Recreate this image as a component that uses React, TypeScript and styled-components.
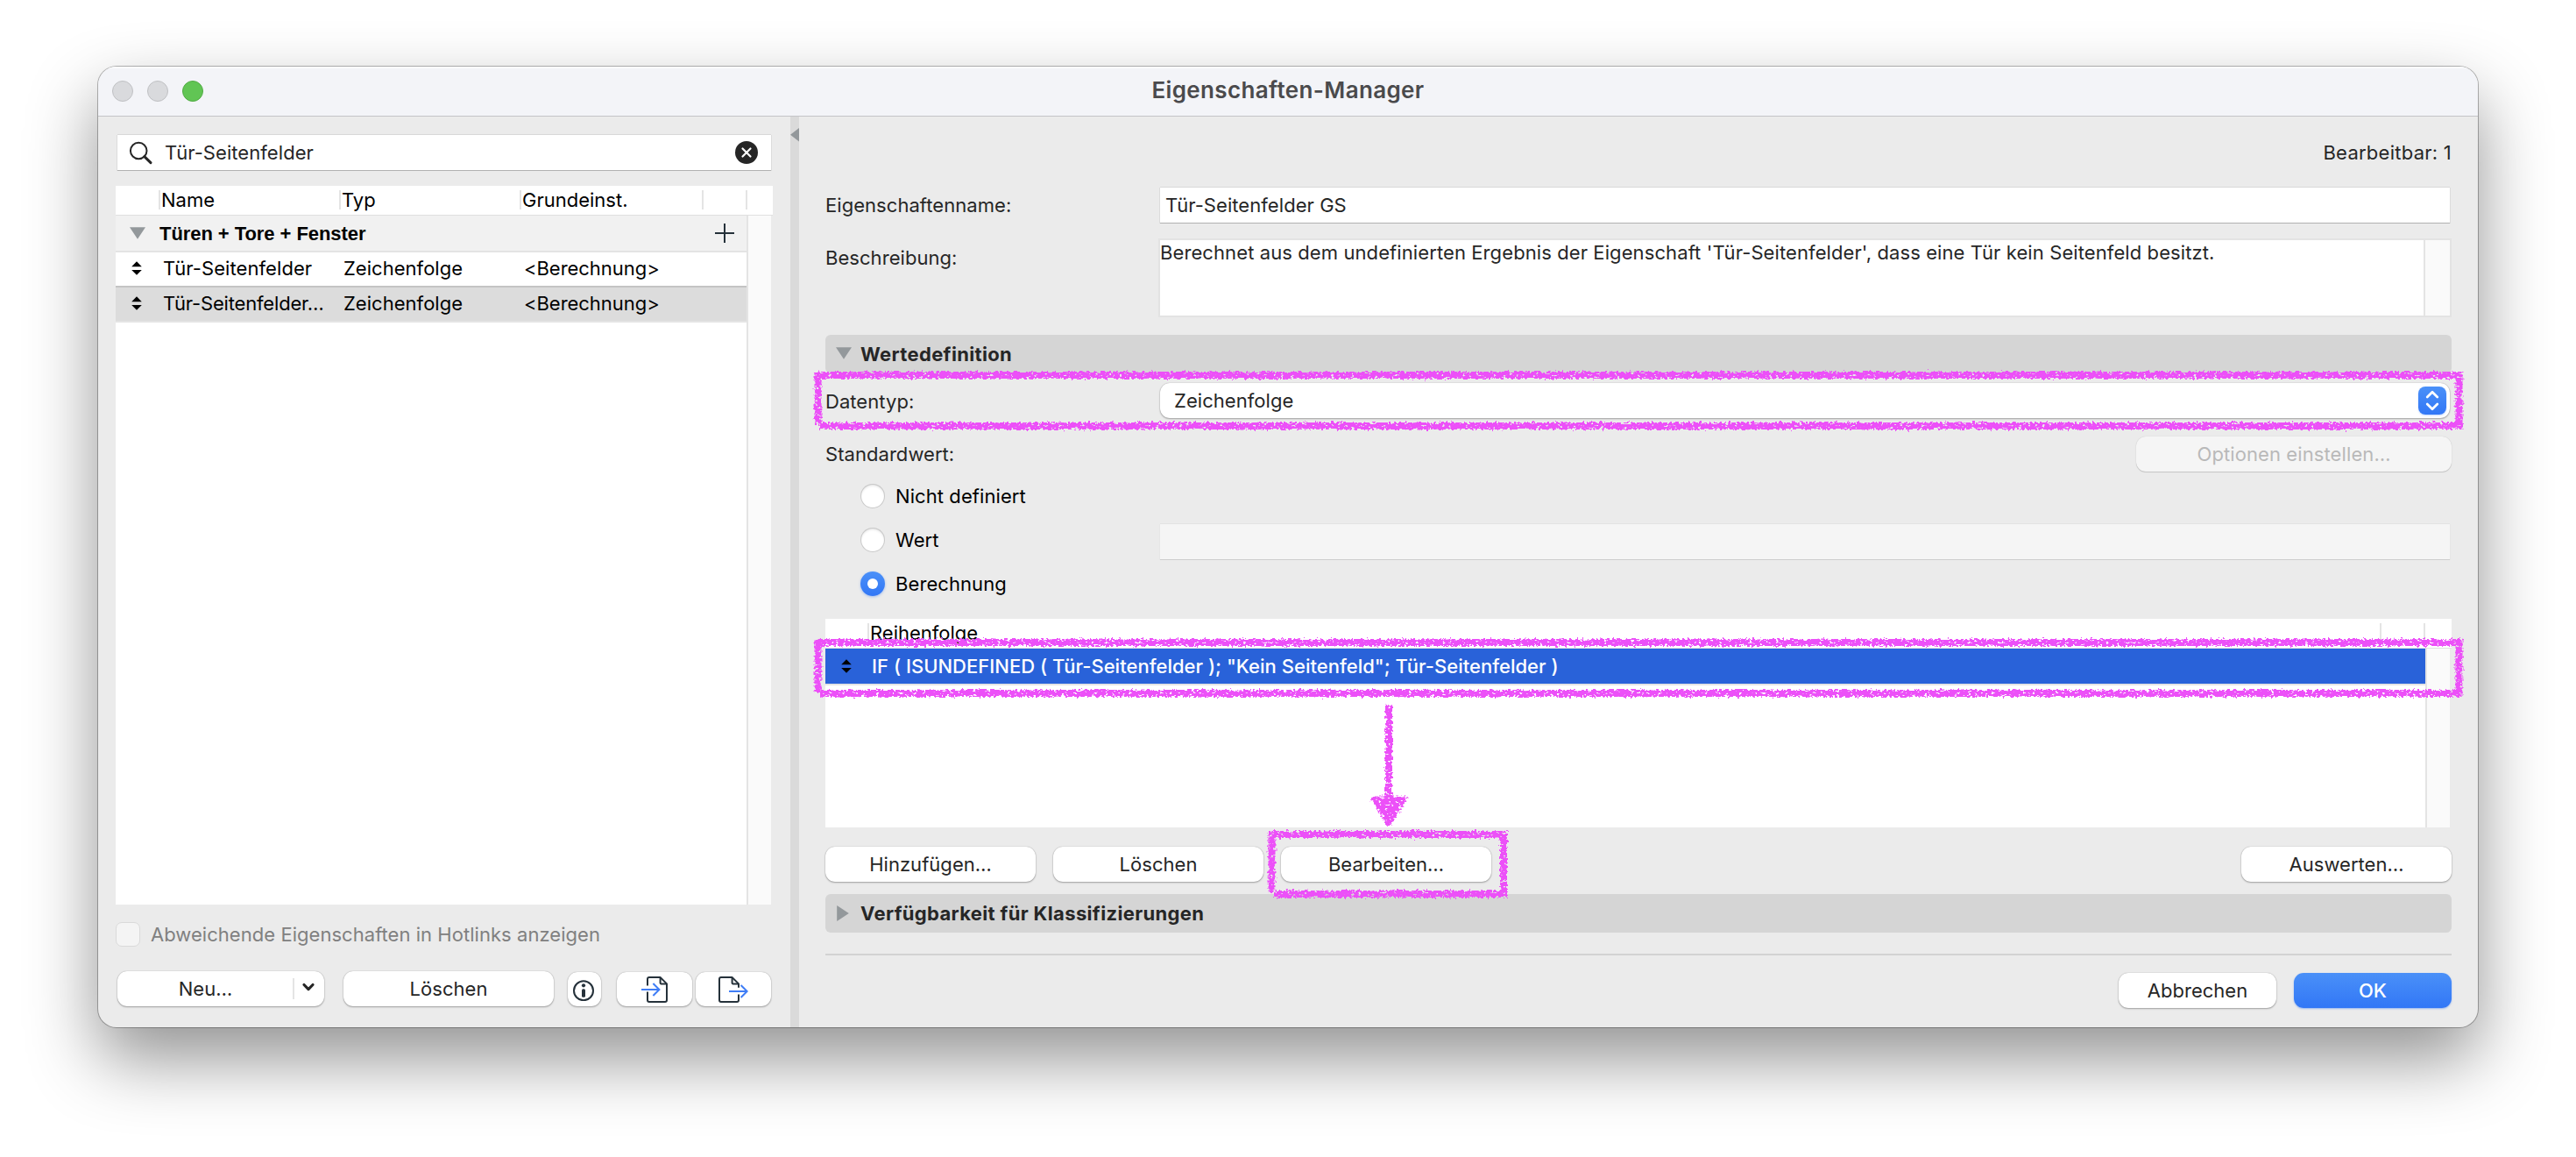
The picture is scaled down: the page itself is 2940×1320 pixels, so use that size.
import React from "react";
import styled, { createGlobalStyle, css } from "styled-components";

const GlobalStyle = createGlobalStyle`
  *, *::before, *::after { box-sizing: border-box; }
  html, body { margin: 0; padding: 0; background: #fff; }
  body {
    font-family: Inter, "Liberation Sans", sans-serif;
    font-size: 22px;
    color: #262626;
    -webkit-font-smoothing: antialiased;
  }
`;

const accent = "linear-gradient(180deg, #4a90f8 0%, #3277f6 100%)";
const marker = "#ec50f8";

/* ---------- window ---------- */

const Desktop = styled.div`
  position: relative;
  width: 2940px;
  height: 1320px;
  overflow: hidden;
  padding: 76px 112px 148px;
`;

const Window = styled.main`
  display: flex;
  flex-direction: column;
  width: 2716px;
  height: 1096px;
  border-radius: 21px;
  overflow: hidden;
  background: #ebebeb;
  box-shadow: 0 0 0 1px rgba(0, 0, 0, 0.28), 0 36px 80px rgba(0, 0, 0, 0.43);
`;

const TitleBar = styled.header`
  display: grid;
  grid-template-columns: 1fr auto 1fr;
  align-items: center;
  height: 57px;
  padding: 0 16px;
  background: #f3f4f8;
  border-bottom: 1px solid #c3c4c7;
  box-shadow: inset 0 2px 0 #fbfcfd;
`;

const Lights = styled.div`
  display: flex;
  gap: 16px;
`;

const Light = styled.span<{ $active?: boolean }>`
  width: 24px;
  height: 24px;
  border-radius: 50%;
  background: ${(p) => (p.$active ? "#61c554" : "#d9dadd")};
  border: 1px solid ${(p) => (p.$active ? "#52ab45" : "#bfc0c3")};
`;

const Title = styled.h1`
  margin: 0;
  padding-bottom: 2px;
  font-size: 26px;
  font-weight: 600;
  line-height: 32px;
  letter-spacing: 0.36px;
  color: #4a4a4c;
`;

const Body = styled.div`
  display: flex;
  flex: 1;
  min-height: 0;
`;

/* ---------- shared parts ---------- */

const Button = styled.button<{ $width: number; $primary?: boolean; $muted?: boolean; $tight?: boolean }>`
  display: flex;
  align-items: center;
  justify-content: center;
  width: ${(p) => p.$width}px;
  height: ${(p) => (p.$tight ? 39 : 40)}px;
  padding: 0;
  border: 0;
  border-radius: 11px;
  background: #fff;
  color: #262626;
  font: inherit;
  letter-spacing: 0.03px;
  white-space: nowrap;
  box-shadow: 0 0 1px rgba(0, 0, 0, 0.35), 0 1px 2px rgba(0, 0, 0, 0.3);
  ${(p) =>
    p.$primary &&
    css`
      background: ${accent};
      color: #fff;
      font-weight: 500;
      box-shadow: 0 1px 2px rgba(50, 119, 246, 0.45);
    `}
  ${(p) =>
    p.$muted &&
    css`
      background: #f5f5f5;
      color: #b9b9b9;
      letter-spacing: 0.1px;
      box-shadow: 0 0 1px rgba(0, 0, 0, 0.2), 0 1px 1px rgba(0, 0, 0, 0.15);
    `}
`;

const Field = styled.div<{ $disabled?: boolean }>`
  display: flex;
  align-items: center;
  height: 41px;
  background: ${(p) => (p.$disabled ? "#f5f5f5" : "#fff")};
  border-bottom: 1px solid ${(p) => (p.$disabled ? "#cdcdcd" : "#b1b1b1")};
  box-shadow: 0 -1px 0 ${(p) => (p.$disabled ? "#e2e2e2" : "#d8d8d8")},
    -1px 0 0 ${(p) => (p.$disabled ? "#e6e6e6" : "#dcdcdc")},
    1px 0 0 ${(p) => (p.$disabled ? "#e6e6e6" : "#dcdcdc")};
`;

const ScrollTrack = styled.div<{ $width: number }>`
  width: ${(p) => p.$width}px;
  background: #fafafa;
  border-left: 2px solid #e4e4e4;
`;

/* ---------- left side ---------- */

const Sidebar = styled.aside`
  display: flex;
  flex-direction: column;
  width: 790px;
  padding: 21px 20px 0;
`;

const SearchField = styled(Field)`
  margin: 0 2px;
  padding: 0 15px 0 13px;
`;

const SearchText = styled.span`
  flex: 1;
  margin-left: 13px;
  letter-spacing: 0.06px;
`;

const Table = styled.section`
  display: flex;
  flex-direction: column;
  width: 750px;
  height: 820px;
  margin-top: 17px;
`;

const TableHead = styled.div<{ $columns: string }>`
  display: grid;
  grid-template-columns: ${(p) => p.$columns};
  align-items: center;
  height: 34px;
  padding-bottom: 1px;
  background: #fff;
  border-bottom: 1px solid #e0e0e0;
  color: #000;
`;

const HeadCell = styled.span<{ $divided?: boolean }>`
  height: 22px;
  line-height: 22px;
  padding-left: 1px;
  white-space: nowrap;
  border-left: 2px solid ${(p) => (p.$divided ? "#e4e4e4" : "transparent")};
`;

const TableBody = styled.div`
  display: flex;
  flex: 1;
  width: 748px;
  background: #fff;
`;

const Rows = styled.div`
  flex: 1;
`;

const GroupRow = styled.div`
  display: flex;
  align-items: center;
  height: 42px;
  padding: 0 13px 0 16px;
  background: #f1f1f1;
  border-bottom: 2px solid #e4e4e4;
`;

const GroupName = styled.strong`
  flex: 1;
  margin-left: 16px;
  padding-top: 2px;
  font-family: "Liberation Sans", Arial, sans-serif;
  font-weight: 700;
  letter-spacing: -0.06px;
  color: #000;
`;

const PropertyRow = styled.div<{ $selected?: boolean }>`
  display: grid;
  grid-template-columns: 54px 206px 206px 1fr;
  align-items: center;
  height: 40px;
  padding-bottom: 2px;
  background: ${(p) => (p.$selected ? "#dcdcdc" : "#fff")};
  border-bottom: 2px solid ${(p) => (p.$selected ? "#e4e4e4" : "#c4c4c4")};
  color: #000;
`;

const Cell = styled.span<{ $tracking?: number }>`
  line-height: 26px;
  white-space: nowrap;
  letter-spacing: ${(p) => p.$tracking ?? 0}px;
`;

const IconCell = styled.span`
  display: flex;
  padding-left: 17px;
`;

const CheckRow = styled.label`
  display: flex;
  align-items: center;
  height: 28px;
  margin-top: 20px;
  letter-spacing: 0.04px;
  color: #808080;
`;

const CheckBox = styled.span`
  width: 28px;
  height: 28px;
  margin-right: 12px;
  border-radius: 7px;
  background: #f4f4f4;
  border: 1px solid #dadada;
`;

const SidebarActions = styled.div`
  display: flex;
  align-items: flex-start;
  margin-top: 28px;
  padding: 0 2px;
`;

const SplitButton = styled(Button)`
  margin-right: 22px;
`;

const SplitLabel = styled.span`
  flex: 1;
  padding-left: 1px;
  text-align: center;
`;

const SplitArrow = styled.span`
  display: flex;
  align-items: center;
  height: 24px;
  width: 36px;
  padding-left: 8px;
  padding-bottom: 2px;
  border-left: 2px solid #e4e4e4;
`;

const IconButton = styled(Button)<{ $gap: number }>`
  margin-top: 1px;
  margin-left: ${(p) => p.$gap}px;
`;

/* ---------- splitter ---------- */

const Splitter = styled.div`
  width: 10px;
  padding-top: 13px;
  background: #dadada;
  line-height: 0;
`;

/* ---------- right side ---------- */

const Detail = styled.section`
  display: flex;
  flex-direction: column;
  width: 1916px;
  padding: 21px 30px 0;
`;

const Editable = styled.div`
  height: 40px;
  line-height: 40px;
  text-align: right;
  letter-spacing: 0.25px;
`;

const FormRow = styled.div<{ $gap: number; $height: number }>`
  display: grid;
  grid-template-columns: 382px 1fr;
  height: ${(p) => p.$height}px;
  margin-top: ${(p) => p.$gap}px;
`;

const Label = styled.span<{ $offset?: number }>`
  height: 40px;
  line-height: 40px;
  margin-top: ${(p) => p.$offset ?? 0}px;
  letter-spacing: 0.05px;
`;

const NameField = styled(Field)`
  margin-right: 2px;
  padding-left: 6px;
  letter-spacing: 0.06px;
`;

const TextArea = styled.div`
  display: flex;
  height: 90px;
  margin-left: -2px;
  background: #fff;
  border: 2px solid #e3e3e3;
`;

const AreaText = styled.p`
  flex: 1;
  margin: 0;
  line-height: 28px;
  white-space: nowrap;
  letter-spacing: 0.096px;
`;

const SectionBar = styled.h2<{ $gap: number }>`
  display: flex;
  align-items: center;
  height: 44px;
  margin: ${(p) => p.$gap}px 0 0;
  padding-left: 11px;
  border-radius: 6px;
  background: #d5d5d5;
  font-size: 22px;
  font-weight: 700;
  letter-spacing: 0.35px;
`;

const SectionIcon = styled.span<{ $indent: number; $lift?: number }>`
  display: flex;
  width: 29px;
  padding-left: ${(p) => p.$indent}px;
  padding-bottom: ${(p) => p.$lift ?? 0}px;
`;

const Select = styled.div`
  display: flex;
  align-items: center;
  justify-content: space-between;
  height: 40px;
  margin-right: 2px;
  padding: 0 4px 0 16px;
  border-radius: 11px;
  background: #fff;
  letter-spacing: 0.05px;
  box-shadow: 0 0 1px rgba(0, 0, 0, 0.35), 0 1px 2px rgba(0, 0, 0, 0.3);
`;

const Stepper = styled.span`
  display: flex;
  align-items: center;
  justify-content: center;
  width: 32px;
  height: 32px;
  border-radius: 8px;
  background: ${accent};
  box-shadow: 0 1px 2px rgba(50, 119, 246, 0.3);
`;

const DefaultRow = styled.div`
  display: flex;
  justify-content: space-between;
  height: 40px;
  margin-top: 21px;
`;

const Options = styled.div`
  display: flex;
  flex-direction: column;
  margin-top: 3px;
`;

const OptionRow = styled.div`
  display: grid;
  grid-template-columns: 382px 1fr;
  align-items: center;
  height: 50px;
`;

const Choice = styled.label`
  display: flex;
  align-items: center;
  padding-left: 40px;
  letter-spacing: 0.08px;
  color: #000;
`;

const Radio = styled.span<{ $checked?: boolean }>`
  display: flex;
  align-items: center;
  justify-content: center;
  width: 28px;
  height: 28px;
  margin-right: 12px;
  border-radius: 50%;
  background: ${(p) => (p.$checked ? accent : "#fff")};
  box-shadow: ${(p) =>
    p.$checked
      ? "0 1px 3px rgba(50, 119, 246, 0.4)"
      : "inset 0 0 0 1px #c9c9c9, inset 0 2px 3px rgba(0, 0, 0, 0.12)"};
  &::after {
    content: "";
    width: 12px;
    height: 12px;
    border-radius: 50%;
    background: #fff;
  }
`;

const ValueField = styled(Field)`
  margin: 4px 2px 0 0;
`;

const RuleTable = styled.section`
  display: flex;
  flex-direction: column;
  height: 238px;
  margin-top: 15px;
`;

const RuleBody = styled.div`
  display: flex;
  flex: 1;
  width: 1854px;
  background: #fff;
`;

const RuleRow = styled.div`
  display: grid;
  grid-template-columns: 53px 1fr;
  align-items: center;
  height: 42px;
  background: #2962d9;
  border-bottom: 2px solid #e4e4e4;
  color: #fff;
  font-weight: 500;
`;

const RuleActions = styled.div`
  display: flex;
  gap: 20px;
  margin-top: 22px;
`;

const Spacer = styled.span`
  flex: 1;
`;

const DialogActions = styled.footer`
  display: flex;
  justify-content: flex-end;
  gap: 20px;
  margin-top: 24px;
  padding-top: 20px;
  border-top: 2px solid #d2d2d2;
`;

/* ---------- drawn marks ---------- */

const MarkLayer = styled.svg`
  position: absolute;
  top: 0;
  left: 0;
  pointer-events: none;
`;

const SearchIcon = () => (
  <svg width="28" height="28" viewBox="0 0 28 28" fill="none" stroke="#262626">
    <circle cx="11.2" cy="12" r="9.3" strokeWidth="2" />
    <path d="M17.8 18.6 L25 25.6" strokeWidth="3" strokeLinecap="round" />
  </svg>
);

const ClearIcon = () => (
  <svg width="26" height="26" viewBox="0 0 26 26">
    <circle cx="13" cy="13" r="13" fill="#262626" />
    <path d="M8.5 8.5 L17.5 17.5 M17.5 8.5 L8.5 17.5" stroke="#fff" strokeWidth="2.2" strokeLinecap="round" />
  </svg>
);

const TriangleDown = () => (
  <svg width="18" height="14" viewBox="0 0 18 14">
    <path d="M0 0.2 H18 L9 13.8 Z" fill="#93989b" />
  </svg>
);

const TriangleRight = () => (
  <svg width="14" height="18" viewBox="0 0 14 18">
    <path d="M0.2 0 V18 L13.8 9 Z" fill="#93989b" />
  </svg>
);

const SplitterArrow = () => (
  <svg width="10" height="16" viewBox="0 0 10 16">
    <path d="M10 0 V15.6 L0 7.8 Z" fill="#93989b" />
  </svg>
);

const PlusIcon = () => (
  <svg width="24" height="24" viewBox="0 0 24 24">
    <path d="M12 1 V23 M1 12 H23" stroke="#25313a" strokeWidth="2" />
  </svg>
);

const SortIcon = () => (
  <svg width="14" height="16" viewBox="0 0 14 16">
    <path d="M7 0.2 L12.8 6.2 H1.2 Z M1.2 10 H12.8 L7 15.8 Z" fill="#000" />
  </svg>
);

const ChevronDown = () => (
  <svg width="16" height="12" viewBox="0 0 16 12">
    <path d="M3 2.5 L8 7.6 L13 2.5" fill="none" stroke="#262626" strokeWidth="3.2" strokeLinecap="round" strokeLinejoin="round" />
  </svg>
);

const StepperIcon = () => (
  <svg width="20" height="26" viewBox="0 0 20 26">
    <path
      d="M4.2 9 L10 3.2 L15.8 9 M4.2 17 L10 22.8 L15.8 17"
      fill="none"
      stroke="#fff"
      strokeWidth="2.7"
      strokeLinecap="round"
      strokeLinejoin="round"
    />
  </svg>
);

const InfoIcon = () => (
  <svg width="26" height="26" viewBox="0 0 26 26">
    <circle cx="12" cy="14.2" r="11" fill="none" stroke="#25313a" strokeWidth="2" />
    <circle cx="12" cy="8.3" r="2.1" fill="#25313a" />
    <rect x="10" y="12.2" width="4" height="9.6" rx="1.6" fill="#25313a" />
  </svg>
);

const ImportIcon = () => (
  <svg width="36" height="32" viewBox="0 0 36 32" fill="none" strokeWidth="2">
    <path
      d="M10 11.6 V4 Q10 2 12 2 H24.5 L32 9.4 V28 Q32 30 30 30 H12 Q10 30 10 28 V18.4"
      stroke="#25313a"
      strokeLinejoin="round"
    />
    <path d="M24.6 3 V8.6 Q24.6 9.4 25.4 9.4 H31.4" stroke="#25313a" />
    <path d="M3 16 H24 M16.4 9 L23.4 16 L16.4 23" stroke="#3f7df6" />
  </svg>
);

const ExportIcon = () => (
  <svg width="36" height="32" viewBox="0 0 36 32" fill="none" strokeWidth="2">
    <path
      d="M24 13.8 V9.4 L16.5 2 H4 Q2 2 2 4 V28 Q2 30 4 30 H22 Q24 30 24 28 V21.4"
      stroke="#25313a"
      strokeLinejoin="round"
    />
    <path d="M16.6 3 V8.6 Q16.6 9.4 17.4 9.4 H23.4" stroke="#25313a" />
    <path d="M13 18 H34 M26.6 11 L33.6 18 L26.6 25" stroke="#3f7df6" />
  </svg>
);

const CrayonMarks = () => (
  <MarkLayer width="2940" height="1320" viewBox="0 0 2940 1320">
    <defs>
      <filter
        id="crayon"
        colorInterpolationFilters="sRGB"
        filterUnits="userSpaceOnUse"
        x="900"
        y="400"
        width="1940"
        height="650"
      >
        <feTurbulence type="fractalNoise" baseFrequency="0.35" numOctaves="2" seed="7" result="grain" />
        <feDisplacementMap in="SourceGraphic" in2="grain" scale="7" xChannelSelector="R" yChannelSelector="G" result="rough" />
        <feTurbulence type="fractalNoise" baseFrequency="0.26 0.4" numOctaves="2" seed="3" result="speck" />
        <feColorMatrix in="speck" type="matrix" values="0 0 0 0 0  0 0 0 0 0  0 0 0 0 0  0 0 0 -9 6.6" result="holes" />
        <feComposite in="rough" in2="holes" operator="in" />
      </filter>
    </defs>
    <g filter="url(#crayon)" fill="none" stroke={marker} strokeWidth="8">
      <path d="M933.5 428 H2806.5 V486 H935 M933.5 425 V485" />
      <path d="M933.5 733 H2806.5 V791 H935 M933.5 730 V790" />
      <path d="M1451.5 952 H1716 V1020 H1454 M1451.5 949 V1018" />
      <path d="M1585 804 V915" />
      <path d="M1567 911 H1604 L1585 940 Z" fill={marker} strokeWidth="5" strokeLinejoin="round" />
    </g>
  </MarkLayer>
);

/* ---------- page ---------- */

type Property = { name: string; type: string; value: string; selected?: boolean; tracking?: number };

const properties: Property[] = [
  { name: "Tür-Seitenfelder", type: "Zeichenfolge", value: "<Berechnung>", tracking: 0.08 },
  { name: "Tür-Seitenfelder…", type: "Zeichenfolge", value: "<Berechnung>", tracking: -0.17, selected: true },
];

export default function App() {
  return (
    <Desktop>
      <GlobalStyle />
      <Window>
        <TitleBar>
          <Lights>
            <Light />
            <Light />
            <Light $active />
          </Lights>
          <Title>Eigenschaften-Manager</Title>
        </TitleBar>
        <Body>
          <Sidebar>
            <SearchField>
              <SearchIcon />
              <SearchText>Tür-Seitenfelder</SearchText>
              <ClearIcon />
            </SearchField>
            <Table>
              <TableHead $columns="49px 206px 206px 208px 50px 1fr">
                <HeadCell />
                <HeadCell $divided>Name</HeadCell>
                <HeadCell $divided>Typ</HeadCell>
                <HeadCell $divided>Grundeinst.</HeadCell>
                <HeadCell $divided />
                <HeadCell $divided />
              </TableHead>
              <TableBody>
                <Rows>
                  <GroupRow>
                    <TriangleDown />
                    <GroupName>Türen + Tore + Fenster</GroupName>
                    <PlusIcon />
                  </GroupRow>
                  {properties.map((p) => (
                    <PropertyRow key={p.name} $selected={p.selected}>
                      <IconCell>
                        <SortIcon />
                      </IconCell>
                      <Cell $tracking={p.tracking}>{p.name}</Cell>
                      <Cell $tracking={0.03}>{p.type}</Cell>
                      <Cell $tracking={-0.04}>{p.value}</Cell>
                    </PropertyRow>
                  ))}
                </Rows>
                <ScrollTrack $width={28} />
              </TableBody>
            </Table>
            <CheckRow>
              <CheckBox />
              Abweichende Eigenschaften in Hotlinks anzeigen
            </CheckRow>
            <SidebarActions>
              <SplitButton $width={236}>
                <SplitLabel>Neu…</SplitLabel>
                <SplitArrow>
                  <ChevronDown />
                </SplitArrow>
              </SplitButton>
              <Button $width={240}>Löschen</Button>
              <IconButton $width={38} $gap={16} $tight>
                <InfoIcon />
              </IconButton>
              <IconButton $width={86} $gap={18} $tight>
                <ImportIcon />
              </IconButton>
              <IconButton $width={86} $gap={4} $tight>
                <ExportIcon />
              </IconButton>
            </SidebarActions>
          </Sidebar>

          <Splitter>
            <SplitterArrow />
          </Splitter>

          <Detail>
            <Editable>Bearbeitbar: 1</Editable>
            <FormRow $gap={20} $height={41}>
              <Label>Eigenschaftenname:</Label>
              <NameField>Tür-Seitenfelder GS</NameField>
            </FormRow>
            <FormRow $gap={17} $height={90}>
              <Label $offset={2}>Beschreibung:</Label>
              <TextArea>
                <AreaText>
                  Berechnet aus dem undefinierten Ergebnis der Eigenschaft 'Tür-Seitenfelder', dass eine Tür kein
                  Seitenfeld besitzt.
                </AreaText>
                <ScrollTrack $width={30} />
              </TextArea>
            </FormRow>
            <SectionBar $gap={20}>
              <SectionIcon $indent={0.6} $lift={3}>
                <TriangleDown />
              </SectionIcon>
              Wertedefinition
            </SectionBar>
            <FormRow $gap={11} $height={40}>
              <Label $offset={1}>Datentyp:</Label>
              <Select>
                Zeichenfolge
                <Stepper>
                  <StepperIcon />
                </Stepper>
              </Select>
            </FormRow>
            <DefaultRow>
              <Label>Standardwert:</Label>
              <Button $width={360} $muted>
                Optionen einstellen…
              </Button>
            </DefaultRow>
            <Options>
              <OptionRow>
                <Choice>
                  <Radio />
                  Nicht definiert
                </Choice>
              </OptionRow>
              <OptionRow>
                <Choice>
                  <Radio />
                  Wert
                </Choice>
                <ValueField $disabled />
              </OptionRow>
              <OptionRow>
                <Choice>
                  <Radio $checked />
                  Berechnung
                </Choice>
              </OptionRow>
            </Options>
            <RuleTable>
              <TableHead $columns="48px 1726px 50px 1fr">
                <HeadCell />
                <HeadCell $divided>Reihenfolge</HeadCell>
                <HeadCell $divided />
                <HeadCell $divided />
              </TableHead>
              <RuleBody>
                <Rows>
                  <RuleRow>
                    <IconCell>
                      <SortIcon />
                    </IconCell>
                    <Cell $tracking={0.02}>
                      {'IF ( ISUNDEFINED ( Tür-Seitenfelder ); "Kein Seitenfeld"; Tür-Seitenfelder )'}
                    </Cell>
                  </RuleRow>
                </Rows>
                <ScrollTrack $width={28} />
              </RuleBody>
            </RuleTable>
            <RuleActions>
              <Button $width={240}>Hinzufügen…</Button>
              <Button $width={240}>Löschen</Button>
              <Button $width={240}>Bearbeiten…</Button>
              <Spacer />
              <Button $width={240}>Auswerten…</Button>
            </RuleActions>
            <SectionBar $gap={14}>
              <SectionIcon $indent={2}>
                <TriangleRight />
              </SectionIcon>
              Verfügbarkeit für Klassifizierungen
            </SectionBar>
            <DialogActions>
              <Button $width={180}>Abbrechen</Button>
              <Button $width={180} $primary>
                OK
              </Button>
            </DialogActions>
          </Detail>
        </Body>
      </Window>
      <CrayonMarks />
    </Desktop>
  );
}
